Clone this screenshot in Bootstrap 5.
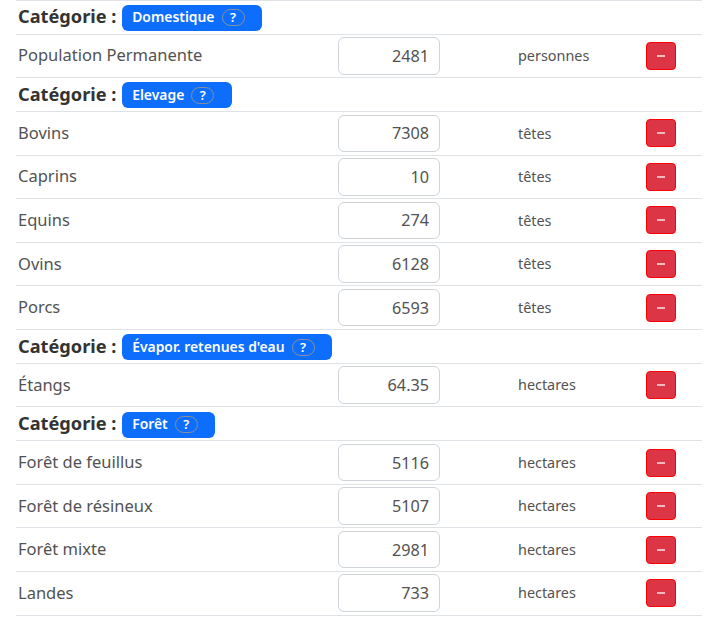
<!DOCTYPE html>
<html lang="fr"><head><meta charset="utf-8"><title>Catégories</title>
<link href="https://cdn.jsdelivr.net/npm/bootstrap@5.3.0/dist/css/bootstrap.min.css" rel="stylesheet">
<style>
body{font-family:"Noto Sans","Open Sans",sans-serif;color:#444;padding:0 10px 0 16px;background:#fff}
.sheet{table-layout:fixed;width:686px;margin:-.5px 0 0;border-top:1px solid #dee2e6}
.sheet td{padding:0 0 0 2px;vertical-align:middle;height:43.55px;font-size:16.5px;color:#525252;border-bottom:1px solid #dee2e6}
.sheet tr.cat td{height:34px;font-size:18.2px;font-weight:700;color:#333;white-space:nowrap}
.tag{display:inline-flex;align-items:center;background:#0d6efd;color:#fff;border-radius:6px;height:26px;padding:0 17.5px 0 10px;font-size:13.9px;font-weight:600;vertical-align:1px;margin-left:1px}
.hint{display:inline-block;border:1px solid #8a8f9a;border-radius:10px;width:23px;height:17px;line-height:15px;text-align:center;margin-left:7px;font-size:13px}
.qty{width:102px;height:37.5px;text-align:right;padding:0 10px;font-size:16.2px;color:#525252;font-family:inherit;margin-left:-2px;border-color:#ced4da}
.sheet td.unit{font-size:14.4px;padding-left:0}
.minus{width:30px;height:28px;padding:0;border:1.5px solid #f00;border-radius:4px;background:#dc3545;display:flex;align-items:center;justify-content:center}
.minus i{display:block;width:8px;height:2px;background:#f3b9bf}
</style></head><body>
<table class="table sheet"><colgroup><col style="width:322px"><col style="width:180px"><col style="width:126px"><col></colgroup><tbody>
<tr class="cat"><td colspan="4">Catégorie : <span class="tag">Domestique<span class="hint">?</span></span></td></tr>
<tr><td>Population Permanente</td><td><input class="form-control qty" value="2481"></td><td class="unit">personnes</td><td><button class="btn btn-danger minus" aria-label="Retirer"><i></i></button></td></tr>
<tr class="cat"><td colspan="4">Catégorie : <span class="tag">Elevage<span class="hint">?</span></span></td></tr>
<tr><td>Bovins</td><td><input class="form-control qty" value="7308"></td><td class="unit">têtes</td><td><button class="btn btn-danger minus" aria-label="Retirer"><i></i></button></td></tr>
<tr><td>Caprins</td><td><input class="form-control qty" value="10"></td><td class="unit">têtes</td><td><button class="btn btn-danger minus" aria-label="Retirer"><i></i></button></td></tr>
<tr><td>Equins</td><td><input class="form-control qty" value="274"></td><td class="unit">têtes</td><td><button class="btn btn-danger minus" aria-label="Retirer"><i></i></button></td></tr>
<tr><td>Ovins</td><td><input class="form-control qty" value="6128"></td><td class="unit">têtes</td><td><button class="btn btn-danger minus" aria-label="Retirer"><i></i></button></td></tr>
<tr><td>Porcs</td><td><input class="form-control qty" value="6593"></td><td class="unit">têtes</td><td><button class="btn btn-danger minus" aria-label="Retirer"><i></i></button></td></tr>
<tr class="cat"><td colspan="4">Catégorie : <span class="tag">Évapor. retenues d'eau<span class="hint">?</span></span></td></tr>
<tr><td>Étangs</td><td><input class="form-control qty" value="64.35"></td><td class="unit">hectares</td><td><button class="btn btn-danger minus" aria-label="Retirer"><i></i></button></td></tr>
<tr class="cat"><td colspan="4">Catégorie : <span class="tag">Forêt<span class="hint">?</span></span></td></tr>
<tr><td>Forêt de feuillus</td><td><input class="form-control qty" value="5116"></td><td class="unit">hectares</td><td><button class="btn btn-danger minus" aria-label="Retirer"><i></i></button></td></tr>
<tr><td>Forêt de résineux</td><td><input class="form-control qty" value="5107"></td><td class="unit">hectares</td><td><button class="btn btn-danger minus" aria-label="Retirer"><i></i></button></td></tr>
<tr><td>Forêt mixte</td><td><input class="form-control qty" value="2981"></td><td class="unit">hectares</td><td><button class="btn btn-danger minus" aria-label="Retirer"><i></i></button></td></tr>
<tr><td>Landes</td><td><input class="form-control qty" value="733"></td><td class="unit">hectares</td><td><button class="btn btn-danger minus" aria-label="Retirer"><i></i></button></td></tr>
</tbody></table>
<script src="https://cdn.jsdelivr.net/npm/bootstrap@5.3.0/dist/js/bootstrap.bundle.min.js"></script>
</body></html>
